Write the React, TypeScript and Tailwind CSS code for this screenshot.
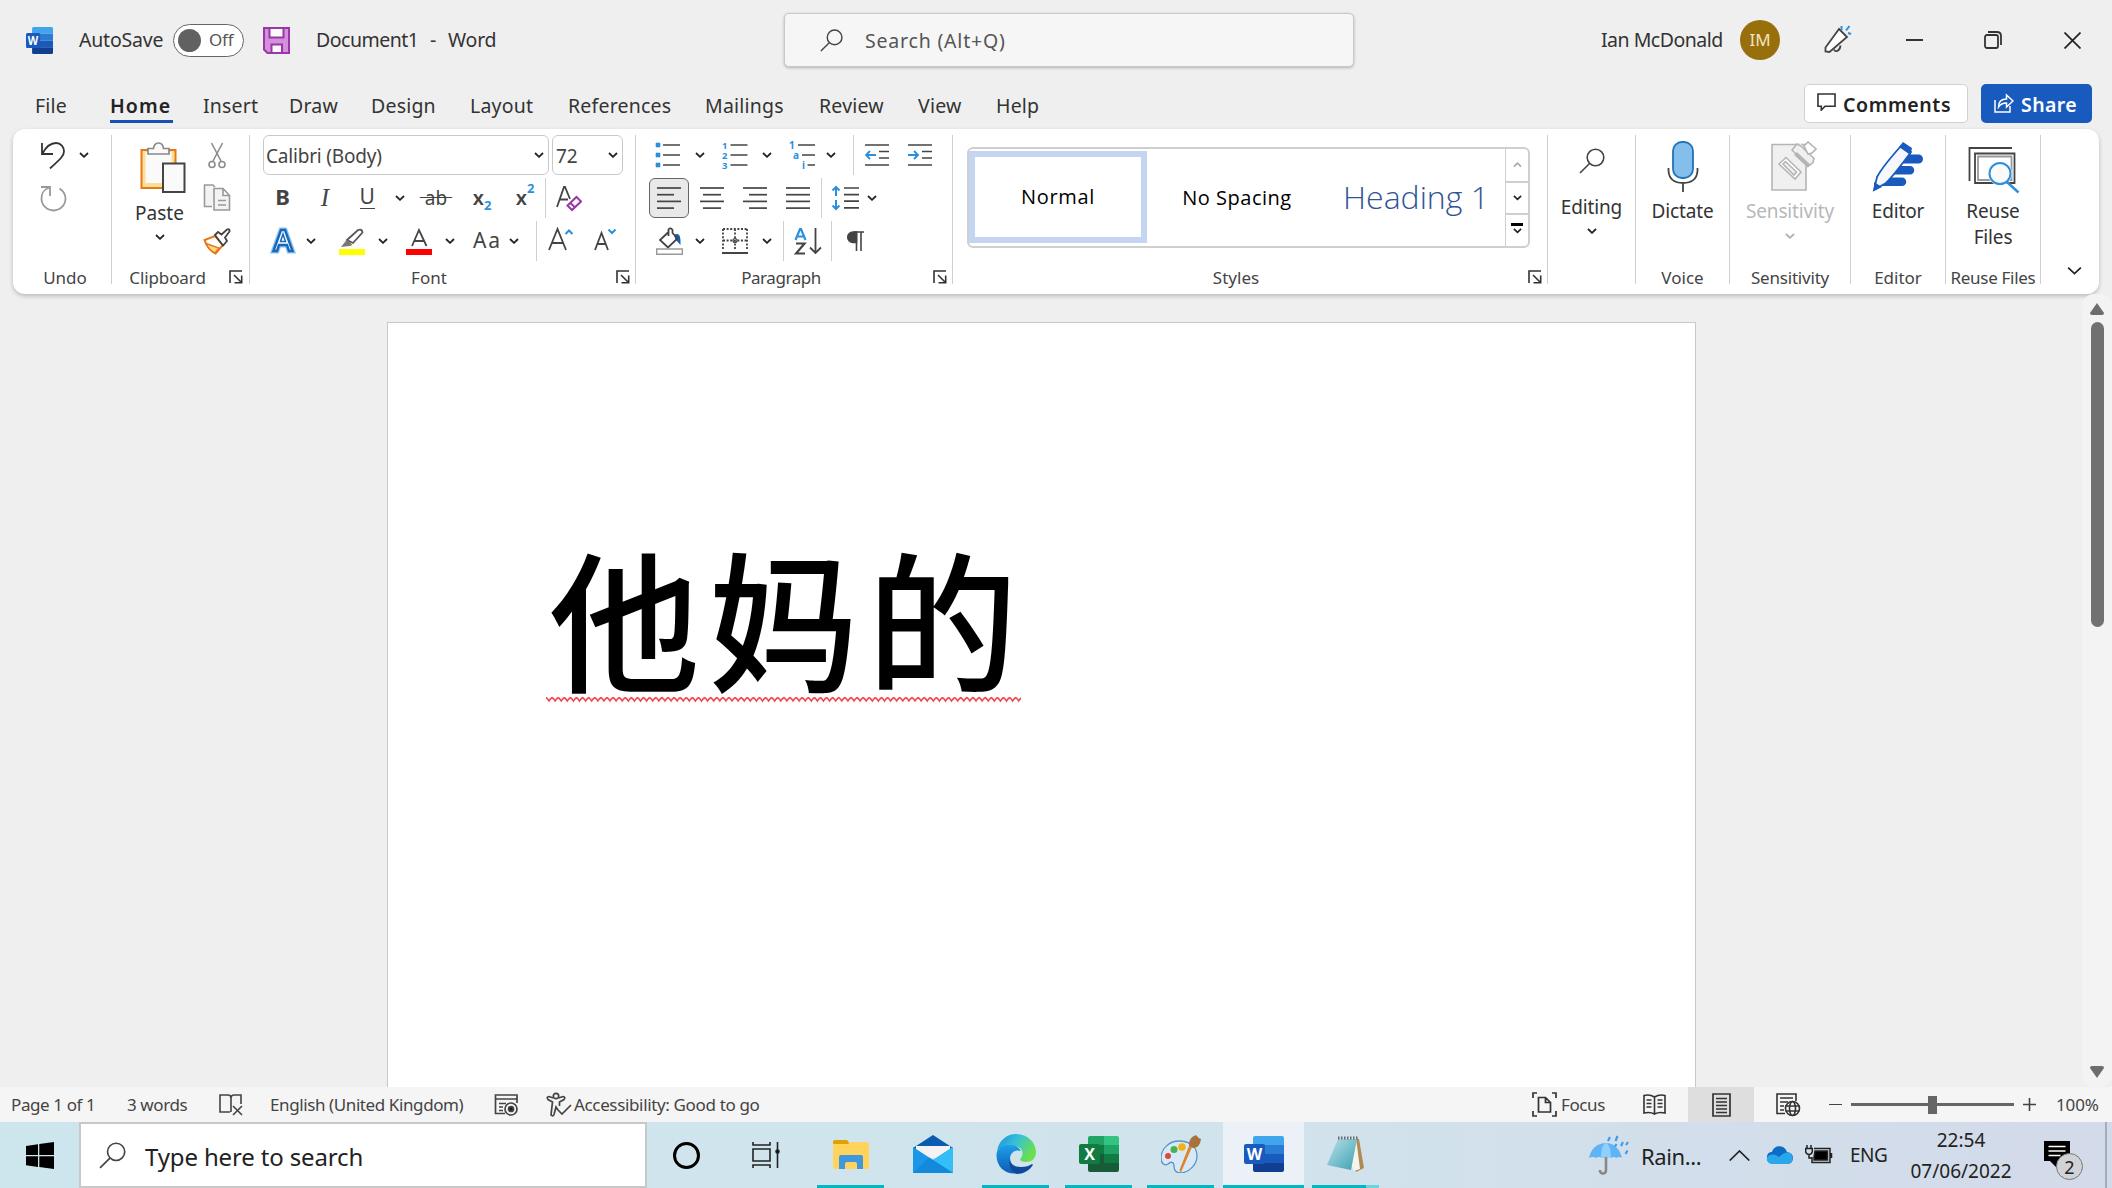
import React from "react";

type Kids = { className?: string; children?: React.ReactNode };

const Row = ({ className = "", children }: Kids) => <div className={`flex h-10 shrink-0 items-center ${className}`}>{children}</div>;
const Cell = ({ className = "", children }: Kids) => (
  <div className={`flex h-full shrink-0 items-center justify-center whitespace-nowrap ${className}`}>{children}</div>
);
const Sep = ({ className = "" }: Kids) => <div className={`h-full w-px shrink-0 bg-[#cfcfcf] ${className}`} />;

const Chev = ({ className = "", up = false, size = 10, color = "#222", sw = 1.8 }: { className?: string; up?: boolean; size?: number; color?: string; sw?: number }) => (
  <div className={`flex shrink-0 items-center justify-center ${className}`}>
    <svg width={size} height={size / 2 + 1} viewBox="0 0 10 6" fill="none" stroke={color} strokeWidth={sw}>
      <path d={up ? "M1 5 5 1.2 9 5" : "M1 1 5 4.8 9 1"} />
    </svg>
  </div>
);

const Launcher = () => (
  <svg width="14" height="14" viewBox="0 0 14 14" fill="none" stroke="#333" strokeWidth="1.6">
    <path d="M1 13V1h12M5 5l7 7M12.700 5.500v7.200H5.500" />
  </svg>
);

const Group = ({ className = "", children }: Kids) => (
  <div className={`flex h-[149px] flex-col border-r border-[#cfcfcf] ${className}`}>{children}</div>
);
const Label = ({ className = "", children }: Kids) => (
  <div className={`shrink-0 text-center text-[17px] leading-[16px] whitespace-nowrap text-[#444] ${className}`}>{children}</div>
);

const WordIcon = ({ w, h }: { w: number; h: number }) => (
  <svg width={w} height={h} viewBox="0 0 40 36" preserveAspectRatio="none">
    <path d="M11 0h27q2 0 2 2v7H9V2q0-2 2-2z" fill="#41a5ee" />
    <path d="M9 9h31v9H9z" fill="#2b7cd3" />
    <path d="M9 18h31v9H9z" fill="#185abd" />
    <path d="M9 27h31v7q0 2-2 2H11q-2 0-2-2z" fill="#103f91" />
    <rect y="8" width="21" height="20" rx="2" fill="#185abd" />
    <text x="10.500" y="24" textAnchor="middle" fontFamily="Open Sans" fontWeight="700" fontSize="16" fill="#fff">W</text>
  </svg>
);

const ExcelIcon = () => (
  <svg width="40" height="36" viewBox="0 0 40 36">
    <path d="M11 0h14v9H9V2q0-2 2-2z" fill="#21a366" />
    <path d="M25 0h13q2 0 2 2v7H25z" fill="#33c481" />
    <path d="M9 9h16v9H9z" fill="#107c41" />
    <path d="M25 9h15v9H25z" fill="#21a366" />
    <path d="M9 18h31v9H9z" fill="#185c37" />
    <path d="M25 18h15v9H25z" fill="#107c41" />
    <path d="M9 27h31v7q0 2-2 2H11q-2 0-2-2z" fill="#185c37" />
    <rect y="8" width="21" height="20" rx="2" fill="#107c41" />
    <text x="10.500" y="24" textAnchor="middle" fontFamily="Open Sans" fontWeight="700" fontSize="16" fill="#fff">X</text>
  </svg>
);

const Magnifier = ({ size, sw = 1.6, className = "" }: { size: number; sw?: number; className?: string }) => (
  <svg className={`shrink-0 ${className}`} width={size} height={size} viewBox="0 0 26 26" fill="none" stroke="#444" strokeWidth={sw}>
    <circle cx="16.500" cy="9.500" r="8.300" />
    <path d="M10.500 15.500 1 25" />
  </svg>
);

const Lines = ({ rows }: { rows: [number, number][] }) => (
  <svg width="24" height="24" viewBox="0 0 24 24" stroke="#444" strokeWidth="1.700">
    {rows.map(([a, b], i) => (
      <path key={i} d={`M${a} ${2 + i * 6.7}H${b}`} />
    ))}
  </svg>
);

const TitleBar = () => (
  <header className="flex h-20 shrink-0 items-center text-[19.5px] whitespace-nowrap text-[#333]">
    <div className="ml-[26px] w-[27px]"><WordIcon w={27} h={27} /></div>
    <span className="ml-[26px] w-[86px] tracking-[-0.2px]">AutoSave</span>
    <div className="ml-2 flex h-[33px] w-[71px] items-center rounded-full border-[1.5px] border-[#666] bg-white pl-[4px]">
      <span className="h-[23px] w-[23px] rounded-full bg-[#616161]" />
      <span className="ml-[8px] text-[17px] tracking-[-0.2px] text-[#555]">Off</span>
    </div>
    <svg className="ml-[19px]" width="27" height="27" viewBox="0 0 27 27" fill="none" stroke="#9a37a6" strokeWidth="2">
      <path d="M1 1h25v25H4.500L1 22.500z" fill="#d48fdd" />
      <path d="M6.500 1h14v9.500h-14z" fill="#fafafa" />
      <path d="M8.500 26v-8.500h10.500V26z" fill="#fafafa" />
    </svg>
    <div className="ml-[26px] flex w-[183px]">
      <span className="w-[114px] tracking-[-0.5px]">Document1</span>
      <span className="w-[18px]">-</span>
      <span className="tracking-[-0.2px]">Word</span>
    </div>
    <div className="ml-[285px] flex h-[54px] w-[570px] items-center rounded-[5px] border border-[#c9c9c9] bg-[#f6f6f6] pl-[35px] shadow-[0_1px_3px_rgba(0,0,0,0.25)]">
      <Magnifier size={23} />
      <span className="ml-[22px] pt-px tracking-[0.8px] text-[#555]">Search (Alt+Q)</span>
    </div>
    <span className="ml-[247px] w-[139px] tracking-[-0.5px]">Ian McDonald</span>
    <span className="flex h-10 w-10 items-center justify-center rounded-full bg-[#986f0b] text-[17px] text-[#eee3c4]">IM</span>
    <svg className="-mt-[3px] ml-[44px]" width="28" height="28" viewBox="0 0 28 28" fill="none" stroke="#444" strokeWidth="1.800">
      <path d="M15 4 1.500 22.500v4l4 .5L23 12z" fill="#fff" />
      <path d="M10 24.500c1 3 6 2 6.500-4" />
      <path d="M17.500 1v4M25.500 1 22 5.500M27 9l-3-1" stroke="#2b8fdc" strokeWidth="2" />
    </svg>
    <div className="ml-[54px] h-[2px] w-[17px] bg-[#333]" />
    <svg className="ml-[61px]" width="18" height="18" viewBox="0 0 18 18" fill="none" stroke="#333" strokeWidth="1.800">
      <rect x="1" y="4" width="13" height="13" rx="2" />
      <path d="M4 1h9q4 0 4 4v9" />
    </svg>
    <svg className="ml-[62px]" width="17" height="17" viewBox="0 0 17 17" stroke="#222" strokeWidth="1.700"><path d="M.5.5l16 16M16.500.5l-16 16" /></svg>
  </header>
);

const tabs: [string, string][] = [
  ["File", "w-[75px]"], ["Home", "w-[93px]"], ["Insert", "w-[86px]"], ["Draw", "w-[82px]"], ["Design", "w-[99px]"], ["Layout", "w-[98px]"],
  ["References", "w-[137px]"], ["Mailings", "w-[114px]"], ["Review", "w-[99px]"], ["View", "w-[78px]"], ["Help", "w-[60px]"],
];

const TabRow = () => (
  <nav className="flex h-[49px] shrink-0 pl-[35px] text-[19.5px] whitespace-nowrap text-[#333]">
    {tabs.map(([t, w]) => (
      <div key={t} className={`h-[44px] shrink-0 pt-[12px] leading-7 tracking-[0.2px] ${w}`}>
        {t === "Home" ? (
          <div className="h-[31px] w-[63px] border-b-[3px] border-[#1850b5] font-semibold tracking-[1.1px] text-[#222]">{t}</div>
        ) : t}
      </div>
    ))}
    <div className="mt-1 ml-[748px] flex h-[39px] w-[164px] items-center rounded-[5px] border border-[#d1d1d1] bg-white pl-[12px] font-semibold text-[#222]">
      <svg className="-mt-1" width="19" height="18" viewBox="0 0 20 19" fill="none" stroke="#333" strokeWidth="1.700"><path d="M1 1h18v13H8.500L4.500 18v-4H1z" /></svg>
      <span className="ml-[7px] pt-[2px] tracking-[0.6px]">Comments</span>
    </div>
    <div className="mt-1 ml-[13px] flex h-[39px] w-[111px] items-center rounded-[5px] bg-[#185abd] pl-[13px] font-semibold text-white">
      <svg className="-mt-px" width="20" height="20" viewBox="0 0 20 20" fill="none" stroke="#fff" strokeWidth="1.500">
        <path d="M1 7v12h15v-6" />
        <path d="M4.500 14c0-5 3-8 8-8V2l6.500 6-6.500 6v-4c-4 0-6 1-8 4z" />
      </svg>
      <span className="ml-[7px] pt-[2px] tracking-[0.4px]">Share</span>
    </div>
  </nav>
);

const UndoGroup = () => (
  <Group>
    <Row className="pl-[27px]">
      <svg width="26" height="27" viewBox="0 0 26 27" fill="none" stroke="#333" strokeWidth="1.800">
        <path d="M2 1v11h11M2.500 11.500C7 3 12 1 16 1c5 0 8 4 8 8.500 0 4-3 7-14 17" />
      </svg>
      <Chev className="ml-[13px] w-[10px]" />
    </Row>
    <Row className="mt-[3px] pl-[27px]">
      <svg width="27" height="27" viewBox="0 0 27 27" fill="none" stroke="#999" strokeWidth="1.800">
        <path d="M1 2h9v9M9.500 2.500C4 4 1.500 9 1.500 13.500a12 12 0 0 0 24 0c0-4-2-7.500-6-10" />
      </svg>
    </Row>
    <Label className="mt-[52px] pl-[6px]">Undo</Label>
  </Group>
);

const ClipboardGroup = () => (
  <Group>
    <div className="flex h-[126px] shrink-0">
      <div className="flex w-[90px] flex-col items-center pt-[7px] pl-[5px]">
        <svg className="ml-[6px]" width="46" height="52" viewBox="0 0 46 52" fill="none">
          <path d="M1.500 8h34v38h-34z" fill="#fbdf96" stroke="#e8771a" strokeWidth="2" />
          <path d="M5.500 10h26v31h-26z" fill="#fafafa" />
          <path d="M8 12V6.500h5.500C14 2.500 16 1 18.500 1S23 2.500 23.500 6.500H29V12z" fill="#fafafa" stroke="#888" strokeWidth="1.700" />
          <path d="M23 21.500h21.500V50H23z" fill="#fafafa" stroke="#444" strokeWidth="2" />
        </svg>
        <span className="mt-[5px] text-[19px] leading-7 text-[#333]">Paste</span>
        <Chev className="mt-[7px] w-[10px]" />
      </div>
      <div className="flex w-[30px] flex-col gap-[3px]">
        <Row className="justify-center">
          <svg width="18" height="27" viewBox="0 0 18 27" fill="none" stroke="#8c8c8c" strokeWidth="1.600">
            <path d="M3.500 1 13 19M14.500 1 5 19" />
            <circle cx="4" cy="22.500" r="3" /><circle cx="14" cy="22.500" r="3" />
          </svg>
        </Row>
        <Row className="justify-center">
          <svg width="28" height="28" viewBox="0 0 28 28" fill="#f3f3f3" stroke="#999" strokeWidth="1.600">
            <path d="M9 22.500H1.500V1H10l2 2" />
            <path d="M11 4.500h9l6.500 7V26H11zM20 4.500v7h6.500M15 16.500h8M15 21h8" />
          </svg>
        </Row>
        <Row className="justify-center">
          <svg width="28" height="27" viewBox="0 0 28 27" fill="none">
            <path d="M12 8 1.500 12c2 6 6 11 11 13.500L20 17z" fill="#fff" stroke="#e8771a" strokeWidth="2" />
            <path d="M3 15.500 16 20l-4 5c-4-2-7-5-9-9.500z" fill="#fbd77e" stroke="#e8771a" strokeWidth="1.400" />
            <path d="m12 7 3-3 3.500 2.500 5.500-5q3-1 2.500 2L22 9.500l2 3.500-4 4.500z" fill="#fff" stroke="#444" strokeWidth="1.800" />
          </svg>
        </Row>
      </div>
    </div>
    <div className="mt-[9px] flex">
      <Label className="w-[111px] tracking-[-0.1px]">Clipboard</Label>
      <div className="ml-[6px]"><Launcher /></div>
    </div>
  </Group>
);

const FontGroup = () => (
  <Group>
    <Row className="pl-[13px]">
      <div className="flex h-10 w-[286px] items-center rounded-[6px] border border-[#c9c9c9] pl-[2px] text-[19px] tracking-[-0.2px] text-[#444]">
        <span className="w-[268px] pt-[2px]">Calibri (Body)</span>
        <Chev className="w-[10px]" />
      </div>
      <div className="ml-[3px] flex h-10 w-[71px] items-center rounded-[6px] border border-[#c9c9c9] pl-[3px] text-[19px] text-[#444]">
        <span className="w-[52px] pt-[2px]">72</span>
        <Chev className="w-[10px]" />
      </div>
    </Row>
    <Row className="mt-[3px] pl-[13px] text-[#444]">
      <Cell className="w-[39px] pb-[3px] text-[22px] font-bold">B</Cell>
      <Cell className="w-[46px] pb-px font-['Liberation_Serif'] text-[25px] italic">I</Cell>
      <Cell className="w-[38px]"><span className="h-[21px] w-[15px] border-b-[1.5px] border-[#444] text-center text-[21px] leading-[17px]">U</span></Cell>
      <Chev className="w-[28px]" />
      <Cell className="w-[44px] text-[19px]"><span className="line-through">{"\u2009\u200aab\u200a\u2009"}</span></Cell>
      <Cell className="w-[48px] text-[20px] font-semibold">x<span className="mt-[15px] text-[13px] font-bold text-[#2b8fdc]">2</span></Cell>
      <Cell className="w-[38px] text-[20px] font-semibold">x<span className="mb-[18px] text-[13px] font-bold text-[#2b8fdc]">2</span></Cell>
      <Sep className="ml-px" />
      <Cell className="w-[46px]">
        <svg width="26" height="27" viewBox="0 0 26 27" fill="none" stroke="#444" strokeWidth="1.800">
          <path d="M1 22 8 2h1l5 12M4 14.500h8" />
          <path d="m20.500 12 4.500 4.500-9 8.500-4.500-4.500zM14 17.500l4.500 4.500" fill="#fff" stroke="#9a37a6" strokeWidth="2" />
        </svg>
      </Cell>
    </Row>
    <Row className="mt-[3px] pl-[13px] text-[#444]">
      <Cell className="w-[40px] pb-[2px]">
        <svg width="26" height="27" viewBox="0 0 26 27" fill="none" strokeLinejoin="miter">
          <path d="M3.500 24 11 3h4l7.500 21h-3.500l-2-6H9l-2 6z" stroke="#8cc4f2" strokeWidth="5" />
          <path d="M3.500 24 11 3h4l7.500 21h-3.500l-2-6H9l-2 6z" fill="#fff" stroke="#1768b8" strokeWidth="2.400" />
          <path d="M10.500 14.500 13 7l2.500 7.500z" fill="#fff" stroke="#1768b8" strokeWidth="1.500" />
        </svg>
      </Cell>
      <Chev className="w-[16px]" />
      <Cell className="ml-[7px] w-[52px]">
        <svg width="26" height="27" viewBox="0 0 26 27" fill="none">
          <path d="m8 12 11-10q4-1.500 4.500 2.500L14 15z" stroke="#555" strokeWidth="1.800" fill="#fff" />
          <path d="m8 11.500 5.500 5.500-3 1L2 19z" fill="#777" />
          <path d="M0 21h26v6H0z" fill="#ff0" />
        </svg>
      </Cell>
      <Chev className="w-[10px]" />
      <Cell className="ml-[6px] w-[50px]">
        <svg width="26" height="27" viewBox="0 0 26 27" fill="none">
          <path d="M6 18 13 2l7.500 16M8.500 13h9.500" stroke="#444" strokeWidth="1.800" />
          <path d="M0 21h26v6H0z" fill="red" />
        </svg>
      </Cell>
      <Chev className="ml-px w-[10px]" />
      <Cell className="ml-[11px] w-[43px] text-[21px] tracking-[2px]">Aa</Cell>
      <Chev className="w-[10px]" />
      <Sep className="ml-[17px]" />
      <Cell className="ml-[4px] w-[40px] pb-[4px]">
        <svg width="26" height="24" viewBox="0 0 26 24" fill="none" stroke="#444" strokeWidth="1.800">
          <path d="M1 23 9.500 2 18 23M4 16h11" />
          <path d="m17.500 7 3.500-3.500L24.500 7" stroke="#2b8fdc" strokeWidth="2" />
        </svg>
      </Cell>
      <Cell className="ml-[4px] w-[40px] pb-[4px]">
        <svg width="24" height="24" viewBox="0 0 24 24" fill="none" stroke="#444" strokeWidth="1.800">
          <path d="M2 23 8.500 6 15 23M4.500 17h8" />
          <path d="m15.500 2.500 3.500 3.500 3.500-3.500" stroke="#2b8fdc" strokeWidth="2" />
        </svg>
      </Cell>
    </Row>
    <div className="mt-[9px] flex">
      <Label className="ml-[12px] w-[334px]">Font</Label>
      <div className="ml-[20px]"><Launcher /></div>
    </div>
  </Group>
);

const ParagraphGroup = () => (
  <Group>
    <Row className="pl-[12px]">
      <Cell className="w-[40px]">
        <svg width="26" height="26" viewBox="0 0 26 26"><path d="M1 1h4v4H1zM1 11h4v4H1zM1 21h4v4H1z" fill="#2b8fdc" stroke="#2b8fdc" strokeWidth=".6" /><path d="M8 3h17M8 13h17M8 23h17" stroke="#444" strokeWidth="1.700" /></svg>
      </Cell>
      <Chev className="ml-[7px] w-[10px]" />
      <Cell className="ml-[10px] w-[40px]">
        <svg className="overflow-visible" width="26" height="28" viewBox="0 0 26 28"><g fontFamily="Noto Sans" fontSize="9.500" fontWeight="700" fill="#2b8fdc"><text x="0" y="7.500">1</text><text x="0" y="17.500">2</text><text x="0" y="27.500">3</text></g><path d="M8.500 4h17M8.500 14h17M8.500 24h17" stroke="#444" strokeWidth="1.700" /></svg>
      </Cell>
      <Chev className="ml-[7px] w-[10px]" />
      <Cell className="ml-[10px] w-[40px]">
        <svg className="overflow-visible" width="26" height="28" viewBox="0 0 26 28"><g fontFamily="Noto Sans" fontSize="10" fontWeight="700" fill="#2b8fdc"><text x="0" y="7.500">1</text><text x="4" y="17.500">a</text><text x="13" y="27.500">i</text></g><path d="M9 4h17M13 14h13M18.500 24H26" stroke="#444" strokeWidth="1.700" /></svg>
      </Cell>
      <Chev className="ml-[4px] w-[10px]" />
      <Sep className="ml-[17px]" />
      {[false, true].map((inc) => (
        <Cell key={String(inc)} className="ml-[3px] w-[40px]">
          <svg width="24" height="24" viewBox="0 0 24 24" fill="none" stroke="#444" strokeWidth="1.700">
            <path d="M0 2h24M14 8.500h10M14 15h10M0 22h24" />
            <path d={inc ? "M0 12h10M6 8l4 4-4 4" : "M1 12h10M5 8l-4 4 4 4"} stroke="#2b8fdc" strokeWidth="1.900" />
          </svg>
        </Cell>
      ))}
    </Row>
    <Row className="mt-[3px] pl-[13px]">
      <Cell className="w-[40px] rounded-[6px] border-[1.5px] border-[#666] bg-[#e9e9e9]"><Lines rows={[[0, 24], [0, 17], [0, 24], [0, 17]]} /></Cell>
      <Cell className="ml-[3px] w-[40px]"><Lines rows={[[0, 24], [3, 21], [0, 24], [3, 21]]} /></Cell>
      <Cell className="ml-[3px] w-[40px]"><Lines rows={[[0, 24], [6, 24], [0, 24], [6, 24]]} /></Cell>
      <Cell className="ml-[3px] w-[40px]"><Lines rows={[[0, 24], [0, 24], [0, 24], [0, 24]]} /></Cell>
      <Sep className="ml-[3px]" />
      <Cell className="ml-[3px] w-[40px]">
        <svg width="28" height="26" viewBox="0 0 28 26" fill="none" stroke="#444" strokeWidth="1.700">
          <path d="M13 3h15M13 9.600h15M13 16.200h15M13 22.900h15" />
          <path d="M5 11V2M1.500 5.500 5 2l3.500 3.500M5 15v9M1.500 20.500 5 24l3.500-3.500" stroke="#2b8fdc" strokeWidth="2" />
        </svg>
      </Cell>
      <Chev className="ml-[2px] w-[10px]" />
    </Row>
    <Row className="mt-[3px] pl-[13px]">
      <Cell className="w-[40px]">
        <svg width="27" height="28" viewBox="0 0 27 28" fill="none" stroke="#444" strokeWidth="1.800">
          <path d="M18 8c5-3 7 0 6.500 10-2-2-3-4-5-5z" fill="#1a5db4" stroke="none" />
          <path d="M12.500 5 4 13l8 7.500 9.500-9-5-5.500V3q-2-3-4-.5V9" />
          <path d="M.7 22h25.600v5.300H.7z" stroke="#999" strokeWidth="1.400" />
        </svg>
      </Cell>
      <Chev className="ml-[6px] w-[10px]" />
      <Cell className="ml-[10px] w-[40px]">
        <svg width="26" height="26" viewBox="0 0 26 26" fill="none" stroke="#444" strokeWidth="1.800">
          <path d="M1 1h24M1 1v21M25 1v21M13 1v21M1 12.500h24" strokeDasharray="2 1.600" />
          <circle cx="13" cy="12.500" r="2" strokeWidth="1.200" /><path d="M0 25h26" strokeWidth="2" />
        </svg>
      </Cell>
      <Chev className="ml-[7px] w-[10px]" />
      <Sep className="ml-[11px]" />
      <Cell className="ml-[4px] w-[40px]">
        <svg width="28" height="28" viewBox="0 0 28 28" fill="none" strokeWidth="2.200">
          <path d="M1.500 13 6 2h1l4.500 11M3 9.500h7" stroke="#2b8fdc" />
          <path d="M2 16.500h8.500l-8.500 10H11" stroke="#444" />
          <path d="M21.500 1v25M16 20.500l5.500 5.500 5.500-5.500" stroke="#444" strokeWidth="1.800" />
        </svg>
      </Cell>
      <Sep className="ml-[3px]" />
      <Cell className="ml-[3px] w-[40px]">
        <svg width="17" height="21" viewBox="0 0 17 21" fill="none" stroke="#444" strokeWidth="1.600"><path d="M17 1H7M9.500 1v19M14 1v19" /><path d="M9.500 1H6a5 5 0 0 0 0 10.500h3.500z" fill="#444" /></svg>
      </Cell>
    </Row>
    <div className="mt-[9px] flex">
      <Label className="w-[290px] tracking-[-0.45px]">Paragraph</Label>
      <div className="ml-[7px]"><Launcher /></div>
    </div>
  </Group>
);

const StylesGroup = () => (
  <Group>
    <div className="mt-[12px] ml-[14px] flex h-[101px] w-[563px] shrink-0 rounded-[6px] border-2 border-[#cfcfcf]">
      <div className="mt-[2px] flex h-[92px] w-[178px] items-center justify-center border-[6px] border-[#c4d5f2] font-['Open_Sans'] text-[20px] tracking-[0.7px] text-black">Normal</div>
      <Cell className="w-[180px] font-['Open_Sans'] text-[20px] tracking-[0.5px] text-black">No Spacing</Cell>
      <Cell className="w-[178px] pb-[2px] font-['Open_Sans'] text-[32px] font-light text-[#2f5496]">Heading 1</Cell>
      <div className="flex flex-1 flex-col border-l border-[#cfcfcf]">
        <Chev up color="#aaa" size={9} className="h-[34px] border-b-2 border-[#cfcfcf]" />
        <Chev size={9} className="h-[32px] border-b-2 border-[#cfcfcf]" />
        <div className="flex flex-1 flex-col items-center pt-[8px]">
          <div className="h-[3px] w-[12px] bg-black" />
          <Chev size={9} className="mt-[2px]" />
        </div>
      </div>
    </div>
    <div className="mt-[22px] flex">
      <Label className="w-[566px]">Styles</Label>
      <div className="ml-[9px]"><Launcher /></div>
    </div>
  </Group>
);

const BigLabel = ({ className = "", children }: Kids) => (
  <div className={`shrink-0 text-center text-[19px] leading-[26px] tracking-[-0.15px] whitespace-nowrap ${className}`}>{children}</div>
);

const RightGroups = () => (
  <>
    <Group className="items-center text-[#333]">
      <Magnifier size={26} className="mt-[13px]" />
      <BigLabel className="mt-[20px]">Editing</BigLabel>
      <Chev className="mt-[8px]" />
    </Group>
    <Group className="items-center text-[#333]">
      <svg className="mt-[6px] shrink-0" width="32" height="51" viewBox="0 0 32 51" fill="none">
        <rect x="6" y="1" width="20" height="36" rx="9" fill="#83beec" stroke="#2272b9" strokeWidth="1.800" />
        <path d="M1.500 27v3q1 12 14.500 12t14.500-12v-3M16 42v9" stroke="#444" strokeWidth="1.800" />
      </svg>
      <BigLabel className="mt-[6px]">Dictate</BigLabel>
      <Label className="mt-[46px]">Voice</Label>
    </Group>
    <Group className="items-center">
      <svg className="mt-[6px] ml-[8px] shrink-0" width="46" height="51" viewBox="0 0 46 51" fill="#f0f0f0" stroke="#b5b5b5" strokeWidth="1.600">
        <path d="M1 3.500h34V49H1z" />
        <path d="M8 23l7-6.500 15 14.500-6 7z" fill="#fff" /><path d="m12 23 2.500-2.500 11 10.500-2.500 3z" />
        <path d="M21 11q5-2 8-9l6 7 4-7q7 3 6 8l-6 5q6 4 4 9l-4 1z" fill="#fff" stroke="none" />
        <path d="m21 9 5-6 4 2 13 12.500-1 4-5 4z" /><path d="m24.500 12.500 13.500 12.500" strokeWidth="4" />
        <path d="m33 5 4-4 8 7-4 4-4 1z" fill="#fff" />
      </svg>
      <BigLabel className="mt-[6px] text-[#b8b8b8]">Sensitivity</BigLabel>
      <Chev color="#b0b0b0" className="mt-[9px]" />
      <Label className="mt-[31px] tracking-[-0.2px]">Sensitivity</Label>
    </Group>
    <Group className="items-center text-[#333]">
      <svg className="mt-[6px] shrink-0" width="52" height="51" viewBox="0 0 52 51" fill="#185abd">
        <path d="M31 13.500h15.500a4.500 4.500 0 0 1 0 9H24zM23 25h15a4.200 4.200 0 0 1 0 8.500H16zM17 36.500h13a4.200 4.200 0 0 1 0 8.500H8z" />
        <path d="M29 5q-18 20-24 31L2 49l12-7Q22 34 39 11z" fill="#f6f8fc" stroke="#185abd" strokeWidth="1.800" />
        <path d="M31 1l9 6-1.500 7L27 6zM2 41v9l8-4z" />
      </svg>
      <BigLabel className="mt-[6px]">Editor</BigLabel>
      <Label className="mt-[46px]">Editor</Label>
    </Group>
    <Group className="items-center text-[#333]">
      <svg className="mt-[11px] ml-[2px] shrink-0" width="52" height="48" viewBox="0 0 52 48" fill="none" stroke="#444" strokeWidth="1.800">
        <path d="M1.500 35V2H44" /><path d="M7 7.500h39.500V37H7z" /><path d="M10 10.500h33.500V34H10z" stroke="#999" />
        <circle cx="32" cy="27.500" r="12" fill="#fff" stroke="none" />
        <circle cx="32" cy="27.500" r="10.500" fill="#fafafa" stroke="#2b8fdc" strokeWidth="2" /><path d="m39 36 11.500 10.500" stroke="#2b8fdc" strokeWidth="2.400" />
      </svg>
      <BigLabel className="mt-[4px]">Reuse<br />Files</BigLabel>
      <Label className="mt-[20px] tracking-[-0.3px]">Reuse Files</Label>
    </Group>
    <div className="flex items-end justify-center pb-[19px] pl-[9px]"><Chev size={17} sw={1.1} /></div>
  </>
);

const Page = () => (
  <main className="flex min-h-0 flex-1 pt-[28px]">
    <div className="ml-[387px] w-[1309px] border border-b-0 border-[#c8c8c8] bg-white">
      <div className="mt-[212px] ml-[158px] w-[475px]">
        <div className="h-[161px] pl-[3px] font-['Noto_Sans_CJK_SC',sans-serif] text-[151px] leading-[161px] font-medium tracking-[8px] whitespace-nowrap text-black">他妈的</div>
        <svg width="475" height="7" viewBox="0 0 475 7" className="block">
          <defs>
            <pattern id="wave" width="6.100" height="7" patternUnits="userSpaceOnUse"><path d="M-.5 1.500Q1 1.500 3 5q2-3.500 3.600-3.500" fill="none" stroke="#f0343c" strokeWidth="1.500" /></pattern>
          </defs>
          <rect width="475" height="7" fill="url(#wave)" />
        </svg>
      </div>
    </div>
    <div className="-mt-[28px] ml-auto flex w-[30px] flex-col items-center rounded-[12px] bg-[#f3f3f3] pt-[9px] pb-[9px]">
      <svg width="14" height="12" viewBox="0 0 14 12" fill="#6d6d6d"><path d="M7 0 14 10q0 2-2 2H2q-2 0-2-2z" /></svg>
      <div className="mt-[7px] h-[305px] w-[13px] rounded-full bg-[#717171]" />
      <svg className="mt-auto" width="14" height="12" viewBox="0 0 14 12" fill="#6d6d6d"><path d="M7 12 14 2q0-2-2-2H2Q0 0 0 2z" /></svg>
    </div>
  </main>
);

const StatusBar = () => (
  <footer className="flex h-[35px] shrink-0 items-center bg-[#f5f5f5] text-[17px] tracking-[-0.4px] whitespace-nowrap text-[#444]">
    <span className="ml-[11px] w-[116px]">Page 1 of 1</span>
    <span className="w-[92px]">3 words</span>
    <svg width="25" height="22" viewBox="0 0 25 22" fill="none" stroke="#444" strokeWidth="1.600"><path d="M11 18H1V1h8q3 0 3 3v14M12 4q0-3 3-3h7v9M14 12l9 9M23 12l-9 9" /></svg>
    <span className="ml-[26px] w-[224px]">English (United Kingdom)</span>
    <svg width="25" height="22" viewBox="0 0 25 22" fill="none" stroke="#444" strokeWidth="1.700"><path d="M11 19.500H1.500V1H23v8M1.500 5H23M5 9.500h7M5 13h4M5 16.500h4" /><circle cx="17" cy="15" r="6" /><circle cx="17" cy="15" r="2.500" fill="#222" /></svg>
    <svg className="ml-[27px]" width="26" height="25" viewBox="0 0 26 25" fill="none" stroke="#444" strokeWidth="1.700"><circle cx="10" cy="4" r="2.700" /><path d="M7.500 6 3 4.500Q0 5 2 7.500L6.500 10 5 23q2 2 3-.5L10 15l2 3M12.500 6 17 4.500q3 .5 1 3L13.500 10v4M12 18l4 4 9-9" /></svg>
    <span className="ml-[2px] tracking-[-0.35px]">Accessibility: Good to go</span>
    <div className="ml-auto flex h-full items-center">
      <svg width="25" height="25" viewBox="0 0 25 25" fill="none" stroke="#333" strokeWidth="1.700"><path d="M5 1H1v5M20 1h4v5M5 24H1v-5M20 24h4v-5M6.500 5.500h7l5 5V20h-12zM13.500 5.500v5h5" /></svg>
      <span className="ml-[4px] w-[82px]">Focus</span>
      <svg width="23" height="22" viewBox="0 0 23 22" fill="none" stroke="#333" strokeWidth="1.600"><path d="M11.500 3q-5-3-10.500-1.500V19q6-1.500 10.500 1 4.500-2.500 10.500-1V1.500Q16.500 0 11.500 3v17M3.500 6h5M3.500 9.500h5M3.500 13h5M14.500 6h5M14.500 9.500h5M14.500 13h5" /></svg>
      <div className="ml-[22px] flex h-full w-[66px] items-center justify-center bg-[#dedede]">
        <svg width="19" height="24" viewBox="0 0 19 24" fill="none" stroke="#333" strokeWidth="1.700"><path d="M1 1h17v22H1zM4 5.500h11M4 9h11M4 12.500h11M4 16h11M4 19.500h11" /></svg>
      </div>
      <svg className="ml-[22px]" width="25" height="24" viewBox="0 0 25 24" fill="none" stroke="#333" strokeWidth="1.600"><path d="M9 20.500H1V1h19v7M4 5h13M4 9h8M4 13h4M4 17h4" /><circle cx="16.500" cy="15.500" r="7" /><ellipse cx="16.500" cy="15.500" rx="3" ry="7" /><path d="M9.500 13h14M9.500 18h14" /></svg>
      <div className="ml-[28px] h-[1.500px] w-[13px] bg-[#444]" />
      <div className="ml-[9px] flex w-[163px] items-center">
        <div className="h-[2.500px] w-[77px] bg-[#666]" /><div className="h-[18px] w-[9px] bg-[#666]" /><div className="h-[2.500px] flex-1 bg-[#666]" />
      </div>
      <svg className="ml-[9px]" width="13" height="13" viewBox="0 0 13 13" stroke="#444" strokeWidth="1.600"><path d="M0 6.500h13M6.500 0v13" /></svg>
      <span className="ml-[20px] w-[56px] tracking-[-0.1px]">100%</span>
    </div>
  </footer>
);

const TaskItem = ({ className = "", active = true, children }: Kids & { active?: boolean }) => (
  <div className={`flex h-full shrink-0 flex-col items-center ${className}`}>
    <div className="flex flex-1 items-center pt-px">{children}</div>
    <div className={`h-[3px] w-full shrink-0 ${active ? "bg-[#00b7c3]" : ""}`} />
  </div>
);

const Taskbar = () => (
  <div className="flex h-[66px] shrink-0 items-center bg-linear-to-r from-[#cde6ed] via-[#d1e3ed] via-60% to-[#d3dae9] whitespace-nowrap text-[#222]">
    <svg className="ml-[26px]" width="28" height="27" viewBox="0 0 28 27" fill="#000"><path d="M0 4 12 2.300V13H0zM13.300 2.100 28 0v13H13.300zM0 14.200h12v10.700L0 23.200zM13.300 14.200H28V27l-14.700-2z" /></svg>
    <div className="ml-[25px] flex h-[66px] w-[568px] items-center border-[2px] border-[#c8c8c8] bg-white pl-[18px]">
      <Magnifier size={27} />
      <span className="ml-[19px] pt-[3px] text-[24px] tracking-[-0.15px]">Type here to search</span>
    </div>
    <div className="ml-[26px] h-[27px] w-[27px] rounded-full border-[3.500px] border-black" />
    <svg className="ml-[52px]" width="28" height="26" viewBox="0 0 28 26" fill="none" stroke="#222" strokeWidth="1.600"><path d="M1 0v3h17V0M1 7h17v12H1zM1 26v-3h17v3M25.500 0v26" /><circle cx="25.500" cy="9.500" r="1.500" fill="#000" /></svg>
    <TaskItem className="ml-[37px] w-[67px]">
      <svg width="36" height="29" viewBox="0 0 36 29"><path d="M0 2q0-2 2-2h12l3 4H0z" fill="#e0a000" /><path d="M0 4h15l3-2h16q2 0 2 2v23q0 2-2 2H2q-2 0-2-2z" fill="#ffd35c" /><path d="M6 29V17q0-2 2-2h20q2 0 2 2v12h-6v-5q0-2-2-2h-8q-2 0-2 2v5z" fill="#3f97dd" /></svg>
    </TaskItem>
    <TaskItem active={false} className="ml-[29px] w-[40px]">
      <svg width="40" height="38" viewBox="0 0 40 38"><path d="M0 13 20 0l20 13v8H0z" fill="#0a5cb0" /><path d="M3 11h34v12H3z" fill="#f3f3f5" /><path d="M0 12 20 25 40 12v26H0z" fill="#1a97e8" /><path d="M40 12v26L16 22.500 20 25z" fill="#35bdf5" /><path d="M0 38h40L16 22.500z" fill="#1389dc" /></svg>
    </TaskItem>
    <TaskItem className="ml-[29px] w-[67px]">
      <svg width="40" height="40" viewBox="0 0 40 40">
        <defs>
          <linearGradient id="e1" x1="0" y1="0" x2="1" y2=".5"><stop offset="0" stopColor="#1b8fe0" /><stop offset=".5" stopColor="#35c1d8" /><stop offset="1" stopColor="#6be04a" /></linearGradient>
          <linearGradient id="e2" x1="0" y1="0" x2="0" y2="1"><stop offset="0" stopColor="#1ea0e8" /><stop offset="1" stopColor="#0b5cb5" /></linearGradient>
        </defs>
        <path d="M1 17C3 6 11 0 20 0c12 0 20 9 20 18 0 7-5 10-10 10-5 0-7-2-5-4 4-6 0-12-8-12C9 12 3 13 1 17z" fill="url(#e1)" />
        <path d="M.500 20C1 14 7 11 14 11c5 0 9 2 11 6-5-2-11 1-11 8 0 6 4 11 10 14-14 3-24-6-23.500-19z" fill="url(#e2)" />
        <path d="M14 24c0 6 4 9 11 9 5 0 8-1 11-3 1 0 1 1 .5 1.500C33 37 27 40 21 40c-6-2-9-9-7-16z" fill="#10499c" />
      </svg>
    </TaskItem>
    <TaskItem className="ml-[16px] w-[67px]"><ExcelIcon /></TaskItem>
    <TaskItem className="ml-[15px] w-[67px]">
      <svg width="40" height="38" viewBox="0 0 40 38">
        <path d="M18 6C8 6 0 14 0 23c0 6 4 8 7 6 3-3 6-2 6 2 0 5 3 7 7 7 9-1 16-9 16-17C36 12 29 6 18 6z" fill="#d6e9f7" stroke="#5b93c4" strokeWidth="1.300" />
        <circle cx="7" cy="21" r="3" fill="#e0483a" /><circle cx="13" cy="14.500" r="3.500" fill="#4cb04f" /><circle cx="21" cy="12" r="3.800" fill="#f5b014" />
        <path d="M31 12 21 35l-1.500 3-1-3L28 11z" fill="#e0822c" /><path d="M28 11q-1-8 7-11 2 3 5 4-1 9-8 9z" fill="#a9713d" />
      </svg>
    </TaskItem>
    <TaskItem className="ml-[9px] w-[81px] bg-[#ecf1f7]"><WordIcon w={40} h={36} /></TaskItem>
    <TaskItem className="ml-[8px] w-[54px]">
      <svg className="ml-[12px]" width="37" height="36" viewBox="0 0 37 36">
        <path d="M12 3h20l5 29-8 4z" fill="#b08a52" /><path d="m12 3 17-1 4 31-6 2z" fill="#f4f4ee" />
        <defs><linearGradient id="np" x1="0" y1="0" x2="1" y2="1"><stop offset="0" stopColor="#b9e2e9" /><stop offset="1" stopColor="#3d9fb2" /></linearGradient></defs>
        <path d="M11 3h19l-6 31L0 29z" fill="url(#np)" /><path d="M11 2h20" stroke="#667" strokeWidth="3" strokeDasharray="1.500 1.500" />
      </svg>
    </TaskItem>
    <div className="h-[3px] w-[13px] self-end bg-[#6fd3dc]" />
    <div className="ml-auto flex h-full items-center">
      <svg width="40" height="40" viewBox="0 0 40 40" fill="none">
        <path d="M0 23C2 13 9 8 17 8s14 6 16 15q-3-2-5.500 0-3-2-5.500 0-4-2-9 0-3-2-6 0-3-2-7 0z" fill="#5fb4f5" /><path d="M12 23C12 14 14 9 17 8c3 1 5 6 5 15-3-1-7-1-10 0z" fill="#8fd0fb" />
        <path d="M17 22v13q0 3.500-3 3.500T11 35" stroke="#888" strokeWidth="2.600" />
        <path d="m21 2-2 4M28.500 1l-2 5M34 7l-2 4M27.500 9l-1.500 2.500M39 7l-2 3M38.500 15.500l-2 3.500" stroke="#3b9cf0" strokeWidth="2.200" />
      </svg>
      <span className="ml-[12px] w-[88px] pt-[3px] text-[22px] tracking-[-0.4px]">Rain...</span>
      <svg width="21" height="11" viewBox="0 0 21 11" fill="none" stroke="#222" strokeWidth="1.700"><path d="M.7 10.500 10.500 1l9.800 9.500" /></svg>
      <svg className="ml-[16px]" width="27" height="18" viewBox="0 0 27 18"><path d="M5 16C-1 14 0 6 6 6 8-1 18-2 21 6q6 1 6 6 0 5-5 6z" fill="#0f6cc4" /><path d="M6 18c-6-.5-7-7-2-9 4-1.500 6 0 9 2 4-4 9-6 12-3 3 4 2 9-3 10z" fill="#28a8ea" /></svg>
      <svg className="ml-[12px]" width="28" height="20" viewBox="0 0 28 20" fill="none" stroke="#222" strokeWidth="1.500"><path d="M9 3.500h16v14H7V12M26.500 8v5M2 0v3M6 0v3M.7 3.500h6.600V7q-1 2.500-3.300 2.500T.7 7zM4 9.500V13h3" /><path d="M10 6h12.500v9H9v-3z" fill="#000" /></svg>
      <span className="ml-[17px] w-[51px] pt-px text-[19px] tracking-[-0.5px]">ENG</span>
      <div className="flex w-[120px] flex-col items-center pt-px text-[19px] leading-[31px]"><span>22:54</span><span>07/06/2022</span></div>
      <div className="relative ml-[23px] h-[28px] w-[28px]">
        <svg width="27" height="27" viewBox="0 0 27 27"><path d="M0 0h26v20H13v7l-7-7H0z" fill="#000" /><path d="M4.500 5.500h17M4.500 10h17M4.500 14.500h12" stroke="#fff" strokeWidth="1.400" /></svg>
        <span className="absolute top-[12px] left-[12px] flex h-[27px] w-[27px] items-center justify-center rounded-full border border-[#777] bg-[#d0d2d6] text-[18px] leading-none">2</span>
      </div>
      <div className="ml-[33px] h-full w-[7px] border-l-2 border-[#a4adba]" />
    </div>
  </div>
);

export default function App() {
  return (
    <div className="flex h-[1188px] w-[2112px] flex-col overflow-hidden bg-[#efefef] font-['Noto_Sans',sans-serif]">
      <TitleBar />
      <TabRow />
      <section className="mx-[13px] grid h-[165px] shrink-0 grid-cols-[99px_138px_386px_317px_595px_88px_94px_121px_95px_95px_58px] rounded-[12px] bg-white pt-[6px] shadow-[0_2px_4px_rgba(0,0,0,0.22)]">
        <UndoGroup />
        <ClipboardGroup />
        <FontGroup />
        <ParagraphGroup />
        <StylesGroup />
        <RightGroups />
      </section>
      <Page />
      <StatusBar />
      <Taskbar />
    </div>
  );
}
